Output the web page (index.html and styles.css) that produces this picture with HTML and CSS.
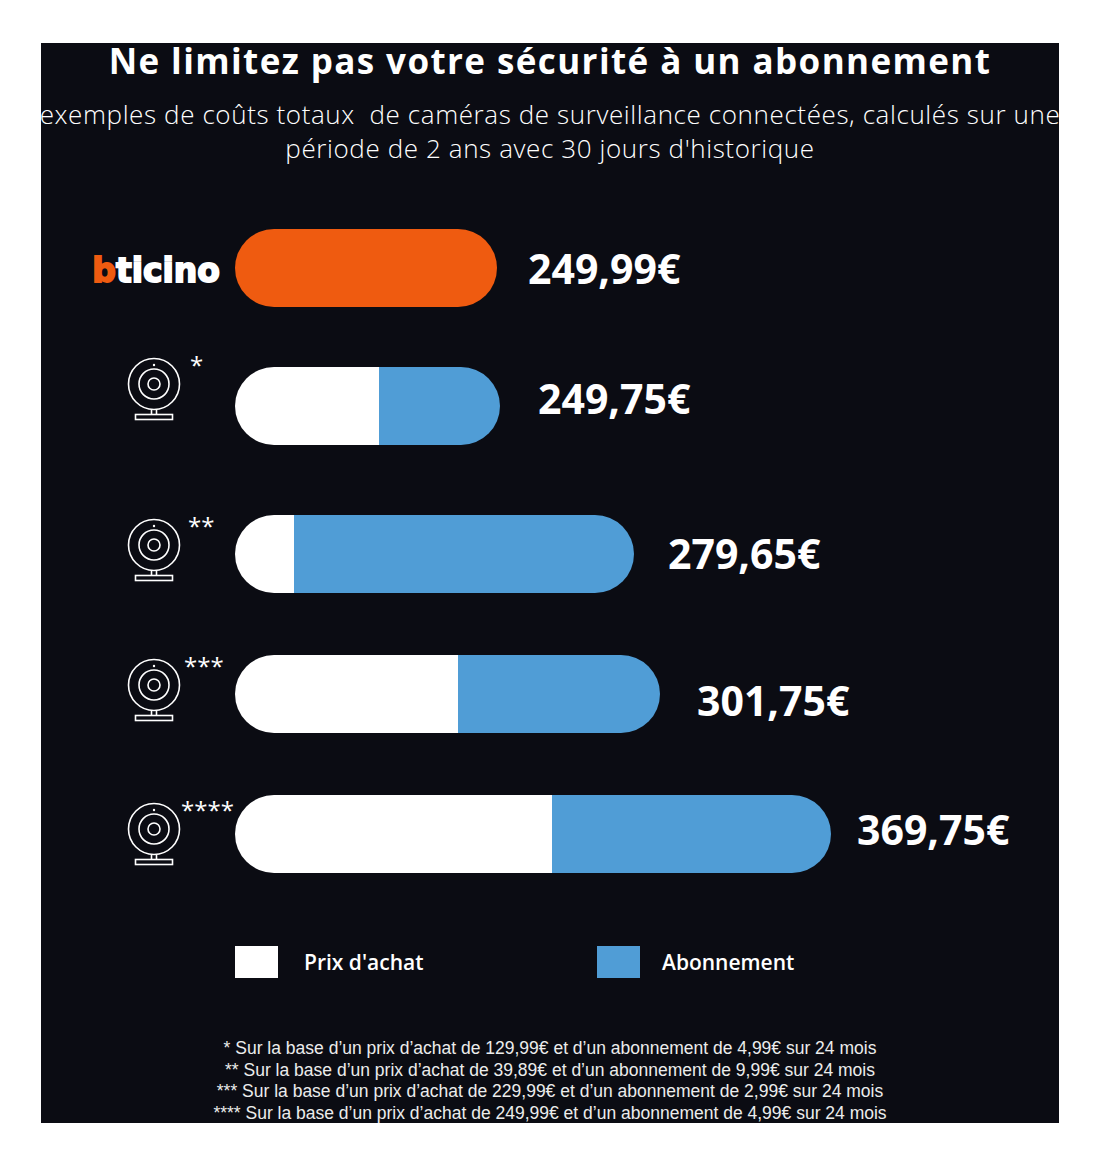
FILE: index.html
```html
<!DOCTYPE html>
<html lang="fr">
<head>
<meta charset="utf-8">
<title>Ne limitez pas votre sécurité à un abonnement</title>
<link rel="stylesheet" href="styles.css">
</head>
<body>
<div class="panel">
  <h1 class="title">Ne limitez pas votre sécurité à un abonnement</h1>
  <p class="subtitle">exemples de coûts totaux&nbsp; de caméras de surveillance connectées, calculés sur une<br>période de 2 ans avec 30 jours d'historique</p>

  <div class="chart">
    <div class="row row--1">
      <div class="label label--logo"><span class="logo"><span class="logo-b">b</span>ticino</span></div>
      <div class="bar"><span class="seg seg--orange" style="width:262px"></span></div>
      <div class="price">249,99€</div>
    </div>

    <div class="row row--2">
      <div class="label">
        <svg class="cam" viewBox="0 0 54 64" width="54" height="64"><circle cx="27" cy="27" r="25.5"/><circle cx="27" cy="27" r="15"/><circle cx="27" cy="27" r="6"/><circle class="dot" cx="27" cy="8" r="1.2"/><path d="M24.5 52.5V57.5M29.5 52.5V57.5"/><rect x="8.5" y="57.5" width="37" height="5"/></svg>
        <span class="stars">*</span>
      </div>
      <div class="bar"><span class="seg seg--white" style="width:144px"></span><span class="seg seg--blue" style="width:121px"></span></div>
      <div class="price">249,75€</div>
    </div>

    <div class="row row--3">
      <div class="label">
        <svg class="cam" viewBox="0 0 54 64" width="54" height="64"><circle cx="27" cy="27" r="25.5"/><circle cx="27" cy="27" r="15"/><circle cx="27" cy="27" r="6"/><circle class="dot" cx="27" cy="8" r="1.2"/><path d="M24.5 52.5V57.5M29.5 52.5V57.5"/><rect x="8.5" y="57.5" width="37" height="5"/></svg>
        <span class="stars">**</span>
      </div>
      <div class="bar"><span class="seg seg--white" style="width:59px"></span><span class="seg seg--blue" style="width:340px"></span></div>
      <div class="price">279,65€</div>
    </div>

    <div class="row row--4">
      <div class="label">
        <svg class="cam" viewBox="0 0 54 64" width="54" height="64"><circle cx="27" cy="27" r="25.5"/><circle cx="27" cy="27" r="15"/><circle cx="27" cy="27" r="6"/><circle class="dot" cx="27" cy="8" r="1.2"/><path d="M24.5 52.5V57.5M29.5 52.5V57.5"/><rect x="8.5" y="57.5" width="37" height="5"/></svg>
        <span class="stars">***</span>
      </div>
      <div class="bar"><span class="seg seg--white" style="width:223px"></span><span class="seg seg--blue" style="width:202px"></span></div>
      <div class="price">301,75€</div>
    </div>

    <div class="row row--5">
      <div class="label">
        <svg class="cam" viewBox="0 0 54 64" width="54" height="64"><circle cx="27" cy="27" r="25.5"/><circle cx="27" cy="27" r="15"/><circle cx="27" cy="27" r="6"/><circle class="dot" cx="27" cy="8" r="1.2"/><path d="M24.5 52.5V57.5M29.5 52.5V57.5"/><rect x="8.5" y="57.5" width="37" height="5"/></svg>
        <span class="stars">****</span>
      </div>
      <div class="bar"><span class="seg seg--white" style="width:317px"></span><span class="seg seg--blue" style="width:279px"></span></div>
      <div class="price">369,75€</div>
    </div>
  </div>

  <div class="legend">
    <div class="legend-item legend-item--achat"><span class="swatch swatch--white"></span><span class="legend-text">Prix d'achat</span></div>
    <div class="legend-item legend-item--abo"><span class="swatch swatch--blue"></span><span class="legend-text">Abonnement</span></div>
  </div>

  <div class="notes">
    <p>* Sur la base d’un prix d’achat de 129,99€ et d’un abonnement de 4,99€ sur 24 mois</p>
    <p>** Sur la base d’un prix d’achat de 39,89€ et d’un abonnement de 9,99€ sur 24 mois</p>
    <p>*** Sur la base d’un prix d’achat de 229,99€ et d’un abonnement de 2,99€ sur 24 mois</p>
    <p>**** Sur la base d’un prix d’achat de 249,99€ et d’un abonnement de 4,99€ sur 24 mois</p>
  </div>
</div>
</body>
</html>
```

FILE: styles.css
```css
html, body {
  margin: 0;
  padding: 0;
  background: #ffffff;
}

.panel {
  margin: 43px 0 0 41px;
  width: 1018px;
  height: 1080px;
  background: #0b0c13;
  color: #ffffff;
  font-family: "Open Sans", "Noto Sans", sans-serif;
}

.title {
  margin: 0;
  font-size: 35px;
  line-height: 36px;
  font-weight: 700;
  letter-spacing: 1.4px;
  text-align: center;
  white-space: nowrap;
}

.subtitle {
  margin: 18px -20px 0;
  font-size: 26px;
  line-height: 34px;
  font-weight: 300;
  letter-spacing: 0.6px;
  text-align: center;
  white-space: nowrap;
  color: #ffffff;
}

.chart {
  margin-top: 64px;
  display: flex;
  flex-direction: column;
  gap: 62px;
}

.row {
  display: flex;
  align-items: center;
  height: 78px;
  --icon-shift: 0px;
  --price-gap: 32px;
  --price-shift: 0px;
  --star-gap: 6px;
}

.row--1 { --price-gap: 31px; }
.row--2 { margin-top: -2px; --icon-shift: 34px; --price-gap: 38px; --price-shift: 16px; --star-gap: 9px; }
.row--3 { margin-top: 8px; --icon-shift: 8px; --price-gap: 34px; --price-shift: 2px; --star-gap: 7px; }
.row--4 { --icon-shift: 8px; --price-gap: 37px; --price-shift: -12px; --star-gap: 3px; }
.row--5 { --icon-shift: 0px; --price-gap: 26px; --price-shift: 10px; --star-gap: 0px; }

.label {
  width: 194px;
  flex: none;
  display: flex;
  align-items: flex-start;
  padding-left: 86px;
  box-sizing: border-box;
  margin-bottom: var(--icon-shift);
}

.label--logo {
  padding-left: 0;
  padding-right: 15px;
  justify-content: flex-end;
  align-items: center;
}

.logo {
  font-family: "DejaVu Sans", sans-serif;
  font-weight: 700;
  font-size: 33px;
  line-height: 1;
  letter-spacing: 0;
  color: #ffffff;
  -webkit-text-stroke: 1.8px currentColor;
  margin-top: 4px;
}

.logo-b {
  color: #ef5b10;
}

.cam {
  display: block;
  flex: none;
  fill: none;
  stroke: #ffffff;
  stroke-width: 1.6;
}

.cam .dot {
  fill: #ffffff;
  stroke: none;
}

.stars {
  margin-left: var(--star-gap);
  margin-top: -4px;
  font-size: 24px;
  line-height: 1;
  color: #ffffff;
}

.bar {
  display: flex;
  height: 78px;
  border-radius: 39px;
  overflow: hidden;
  flex: none;
}

.seg {
  display: block;
  height: 100%;
}

.seg--orange { background: #ef5b10; }
.seg--white { background: #ffffff; }
.seg--blue { background: #509dd6; }

.price {
  margin-left: var(--price-gap);
  margin-bottom: var(--price-shift);
  font-size: 41px;
  line-height: 1;
  font-weight: 700;
  color: #ffffff;
  white-space: nowrap;
}

.legend {
  margin-top: 73px;
  padding-left: 194px;
  display: flex;
  align-items: center;
  height: 32px;
}

.legend-item {
  display: flex;
  align-items: center;
}

.legend-item--achat {
  width: 362px;
  gap: 26px;
}

.legend-item--abo {
  gap: 22px;
}

.swatch {
  width: 43px;
  height: 32px;
  display: block;
}

.swatch--white { background: #ffffff; }
.swatch--blue { background: #509dd6; }

.legend-text {
  font-size: 21px;
  font-weight: 600;
  line-height: 1;
  color: #ffffff;
}

.notes {
  margin-top: 60px;
  height: 127px;
  overflow: hidden;
  text-align: center;
  font-family: "Liberation Sans", Arial, sans-serif;
  font-size: 17.5px;
  line-height: 21.5px;
  color: #ececec;
}

.notes p {
  margin: 0;
  white-space: nowrap;
}
```
